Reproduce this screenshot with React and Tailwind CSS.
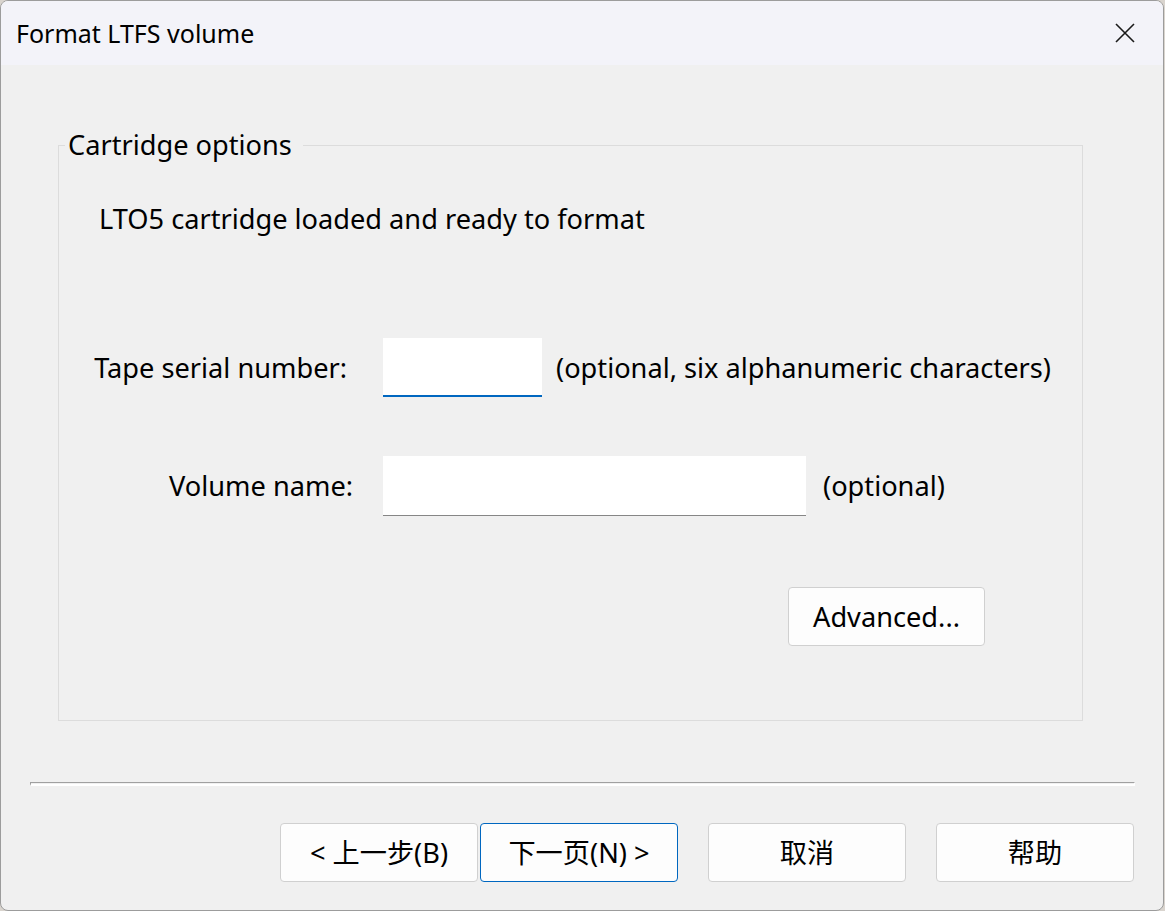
import React from "react";

const FONT = "font-['Noto_Sans','Noto_Sans_CJK_SC',sans-serif]";

const DialogButton = ({ children, primary }) => (
  <button
    className={`w-[198px] h-[59px] rounded-[4px] bg-[#fdfdfd] text-[27.2px] leading-[32px] text-black border ${
      primary ? "border-[#0067c0]" : "border-[#d0d0d0]"
    }`}
  >
    {children}
  </button>
);

const App = () => {
  return (
    <div className={`w-[1165px] h-[911px] bg-[#d9d4ce] ${FONT}`}>
      <div className="w-[1164px] h-[911px] flex flex-col bg-[#f0f0f0] border border-[#9c9c9c] rounded-[8px] overflow-hidden text-black">
        {/* title bar */}
        <div className="h-[64px] shrink-0 bg-[#f3f3f9] flex items-center justify-between pl-[15px] pr-[28px]">
          <span className="text-[25px] leading-[32px]">Format LTFS volume</span>
          <svg width="20" height="20" viewBox="0 0 20 20">
            <path d="M1 1 L19 19 M19 1 L1 19" stroke="#1a1a1a" strokeWidth="1.6" />
          </svg>
        </div>

        {/* body */}
        <div className="flex flex-col">
          <fieldset className="ml-[57px] mt-[64px] w-[1025px] h-[592px] border border-[#dcdcdc] rounded-none">
            <legend className="ml-[6px] pl-[3px] pr-[11px] text-[27.2px] leading-[32px]">
              Cartridge options
            </legend>
            <div className="flex flex-col pt-[42px] text-[27.2px] leading-[32px]">
              <div className="pl-[40px]">LTO5 cartridge loaded and ready to format</div>

              <div className="flex items-center mt-[103px] h-[59px]">
                <span className="w-[294px] text-right pr-[6px]">Tape serial number:</span>
                <div className="ml-[30px] w-[159px] h-[59px] bg-white border-b-2 border-[#0067c0]" />
                <span className="ml-[14px]">(optional, six alphanumeric characters)</span>
              </div>

              <div className="flex items-center mt-[59px] h-[60px]">
                <span className="w-[294px] text-right">Volume name:</span>
                <div className="ml-[30px] w-[423px] h-[60px] bg-white border-b border-[#868686]" />
                <span className="ml-[17px]">(optional)</span>
              </div>

              <div className="flex justify-end pr-[97px] mt-[71px]">
                <button className="w-[197px] h-[59px] rounded-[4px] bg-[#fdfdfd] border border-[#d0d0d0]">
                  Advanced...
                </button>
              </div>
            </div>
          </fieldset>

          <div className="ml-[29px] mt-[61px] w-[1105px] h-[4px] border-t border-l border-[#a0a0a0] border-b-2 border-r border-b-white border-r-white" />

          <div className="flex justify-end items-center mt-[37px] pr-[29px]">
            <div className="flex gap-[2px]">
              <DialogButton>&lt; 上一步(B)</DialogButton>
              <DialogButton primary>下一页(N) &gt;</DialogButton>
            </div>
            <div className="ml-[30px]">
              <DialogButton>取消</DialogButton>
            </div>
            <div className="ml-[30px]">
              <DialogButton>帮助</DialogButton>
            </div>
          </div>
        </div>
      </div>
    </div>
  );
};

export default App;
